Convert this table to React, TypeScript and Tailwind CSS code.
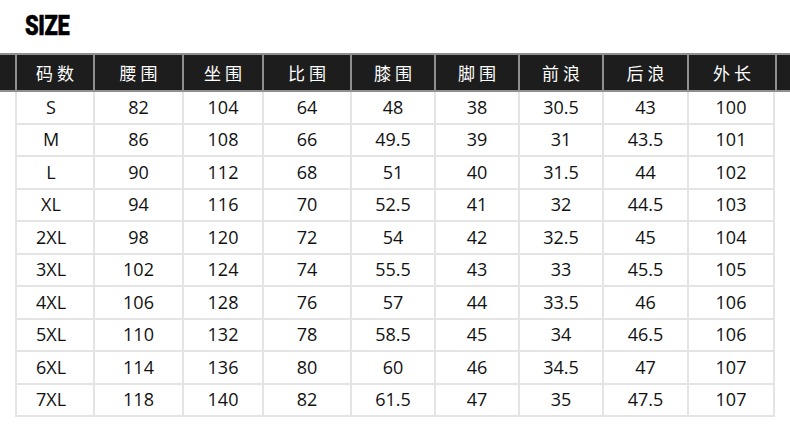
import React from "react";

const headers = ["码数", "腰围", "坐围", "比围", "膝围", "脚围", "前浪", "后浪", "外长"];

const rows: string[][] = [
    ["S", "82", "104", "64", "48", "38", "30.5", "43", "100"],
    ["M", "86", "108", "66", "49.5", "39", "31", "43.5", "101"],
    ["L", "90", "112", "68", "51", "40", "31.5", "44", "102"],
    ["XL", "94", "116", "70", "52.5", "41", "32", "44.5", "103"],
    ["2XL", "98", "120", "72", "54", "42", "32.5", "45", "104"],
    ["3XL", "102", "124", "74", "55.5", "43", "33", "45.5", "105"],
    ["4XL", "106", "128", "76", "57", "44", "33.5", "46", "106"],
    ["5XL", "110", "132", "78", "58.5", "45", "34", "46.5", "106"],
    ["6XL", "114", "136", "80", "60", "46", "34.5", "47", "107"],
    ["7XL", "118", "140", "82", "61.5", "47", "35", "47.5", "107"],
];

// column widths taken from the picture, stubs of 15px on each side
const cols = "grid-cols-[15px_78px_89px_80px_88px_84px_84px_84px_85px_88px_15px]";

const App: React.FC = () => {
    return (
        <div className="w-[790px] h-[440px] bg-white overflow-hidden font-['Open_Sans','Noto_Sans_CJK_SC',sans-serif]">
            {/* title */}
            <div className="h-[53px] pl-[25px] pt-[10px]">
                <h1 className="font-['Roboto',sans-serif] font-black text-[28px] leading-[32px] text-black tracking-[-0.5px] scale-x-[0.78] origin-left [-webkit-text-stroke:0.5px_black]">
                    SIZE
                </h1>
            </div>

            {/* header bar */}
            <div className={`grid ${cols} h-[39px] bg-[#1d1d1d] border-y-2 border-[#8f8f8f]`}>
                <div />
                {headers.map((h) => (
                    <div
                        key={h}
                        className="flex items-center justify-center border-l-2 border-[#8f8f8f] text-white text-[17px] tracking-[4px] pl-[4px] font-['Noto_Sans_CJK_SC',sans-serif]"
                    >
                        {h}
                    </div>
                ))}
                <div className="border-l-2 border-[#8f8f8f]" />
            </div>

            {/* body */}
            <div className="flex flex-col">
                {rows.map((r, i) => (
                    <div key={i} className={`grid ${cols} h-[32.5px]`}>
                        <div />
                        {r.map((v, j) => (
                            <div
                                key={j}
                                className={`flex items-center justify-center border-l-2 border-b-2 border-[#e4e4e4] text-[18px] text-[#111] ${
                                    j === r.length - 1 ? "border-r-2" : ""
                                } ${j === 0 ? "pr-[8px]" : ""}`}
                            >
                                {v}
                            </div>
                        ))}
                        <div />
                    </div>
                ))}
            </div>
        </div>
    );
};

export default App;
